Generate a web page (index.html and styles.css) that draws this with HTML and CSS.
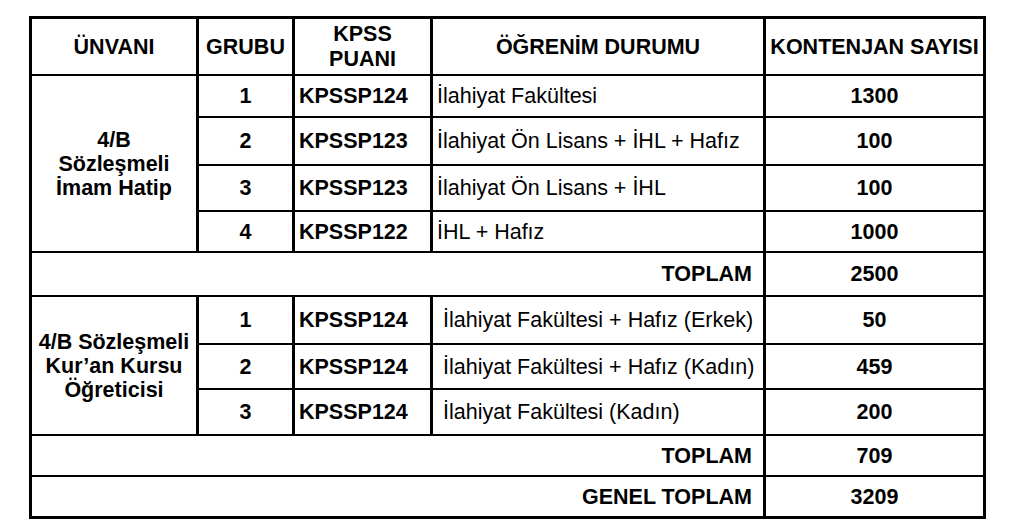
FILE: index.html
```html
<!DOCTYPE html>
<html lang="tr">
<head>
<meta charset="utf-8">
<title>Kontenjan Tablosu</title>
<link rel="stylesheet" href="styles.css">
</head>
<body>
<div class="table">
  <div class="cell head">ÜNVANI</div>
  <div class="cell head">GRUBU</div>
  <div class="cell head two">KPSS<br>PUANI</div>
  <div class="cell head">ÖĞRENİM DURUMU</div>
  <div class="cell head">KONTENJAN SAYISI</div>

  <div class="cell title span4">4/B<br>Sözleşmeli<br>İmam Hatip</div>
  <div class="cell num">1</div>
  <div class="cell code">KPSSP124</div>
  <div class="cell edu">İlahiyat Fakültesi</div>
  <div class="cell num">1300</div>

  <div class="cell num">2</div>
  <div class="cell code">KPSSP123</div>
  <div class="cell edu">İlahiyat Ön Lisans + İHL + Hafız</div>
  <div class="cell num">100</div>

  <div class="cell num">3</div>
  <div class="cell code">KPSSP123</div>
  <div class="cell edu">İlahiyat Ön Lisans + İHL</div>
  <div class="cell num">100</div>

  <div class="cell num">4</div>
  <div class="cell code">KPSSP122</div>
  <div class="cell edu">İHL + Hafız</div>
  <div class="cell num">1000</div>

  <div class="cell total">TOPLAM</div>
  <div class="cell num">2500</div>

  <div class="cell title span3">4/B Sözleşmeli<br>Kur’an Kursu<br>Öğreticisi</div>
  <div class="cell num">1</div>
  <div class="cell code">KPSSP124</div>
  <div class="cell edu wide">İlahiyat Fakültesi + Hafız (Erkek)</div>
  <div class="cell num">50</div>

  <div class="cell num">2</div>
  <div class="cell code">KPSSP124</div>
  <div class="cell edu wide">İlahiyat Fakültesi + Hafız (Kadın)</div>
  <div class="cell num">459</div>

  <div class="cell num">3</div>
  <div class="cell code">KPSSP124</div>
  <div class="cell edu wide">İlahiyat Fakültesi (Kadın)</div>
  <div class="cell num">200</div>

  <div class="cell total">TOPLAM</div>
  <div class="cell num">709</div>

  <div class="cell total">GENEL TOPLAM</div>
  <div class="cell num">3209</div>
</div>
</body>
</html>
```

FILE: styles.css
```css
html, body {
  margin: 0;
  padding: 0;
  background: #ffffff;
}

body {
  font-family: "Liberation Sans", Arial, sans-serif;
  color: #000000;
}

.table {
  margin: 16px 0 0 29px;
  width: 957px;
  box-sizing: border-box;
  display: grid;
  grid-template-columns: 164px 93px 135px 330px 217px;
  grid-template-rows: 55px 40px 46px 44px 39px 42px 46px 43px 44px 39px 39px;
  column-gap: 3px;
  row-gap: 2px;
  padding: 3px;
  background: #000000;
}

.cell {
  background: #ffffff;
  display: flex;
  align-items: center;
  justify-content: center;
  text-align: center;
  font-size: 21.5px;
  line-height: 24px;
  font-weight: bold;
  white-space: nowrap;
}

.head.two {
  line-height: 25px;
}

.title {
  line-height: 24px;
}

.span4 {
  grid-row: span 4;
}

.span3 {
  grid-row: span 3;
}

.code {
  justify-content: flex-start;
  padding-left: 4px;
}

.edu {
  justify-content: flex-start;
  font-weight: normal;
  padding-left: 4px;
}

.edu.wide {
  padding-left: 10px;
}

.total {
  grid-column: span 4;
  justify-content: flex-end;
  padding-right: 11px;
}
```
